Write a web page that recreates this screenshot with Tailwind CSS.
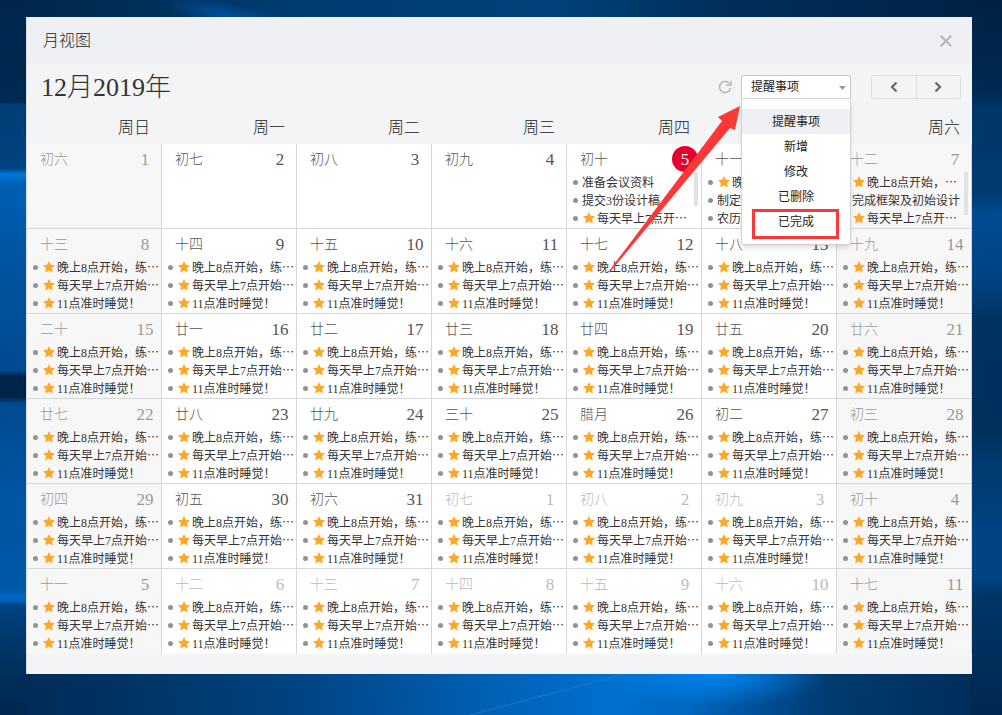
<!DOCTYPE html>
<html lang="zh-CN">
<head>
<meta charset="utf-8">
<meta name="viewport" content="width=device-width, initial-scale=1">
<title>月视图</title>
<script src="https://cdn.jsdelivr.net/npm/@tailwindcss/browser@4"></script>
</head>
<body class="relative min-h-screen overflow-hidden bg-[#003868] font-['Liberation_Serif','Noto_Sans_CJK_SC',sans-serif] text-[#222]">

<!-- Wallpaper -->
<svg class="absolute inset-0 h-full w-full" viewBox="0 0 1002 715" preserveAspectRatio="none" aria-hidden="true">
  <defs>
    <linearGradient id="top" x1="0" x2="1" y1="0" y2="0">
      <stop offset="0" stop-color="#00264a"/><stop offset=".15" stop-color="#003058"/><stop offset=".27" stop-color="#003a70"/><stop offset=".55" stop-color="#00427c"/><stop offset=".72" stop-color="#002f5a"/><stop offset="1" stop-color="#002145"/>
    </linearGradient>
    <linearGradient id="left" x1="0" x2="0" y1="0" y2="1">
      <stop offset="0" stop-color="#00264d"/><stop offset=".143" stop-color="#002a52"/><stop offset=".146" stop-color="#003e76"/><stop offset=".235" stop-color="#00437f"/><stop offset=".244" stop-color="#0078dc"/><stop offset=".256" stop-color="#0060b4"/><stop offset=".35" stop-color="#0055a4"/><stop offset=".518" stop-color="#004a90"/><stop offset=".526" stop-color="#00234a"/><stop offset=".555" stop-color="#00234a"/><stop offset=".565" stop-color="#004a90"/><stop offset=".7" stop-color="#0055a4"/><stop offset=".82" stop-color="#0057a8"/><stop offset=".838" stop-color="#0069c4"/><stop offset=".848" stop-color="#004280"/><stop offset=".93" stop-color="#00315f"/><stop offset="1" stop-color="#002850"/>
    </linearGradient>
    <linearGradient id="right" x1="0" x2="0" y1="0" y2="1">
      <stop offset="0" stop-color="#002145"/><stop offset=".13" stop-color="#002a52"/><stop offset=".15" stop-color="#00376a"/><stop offset=".27" stop-color="#003a70"/><stop offset=".3" stop-color="#004c90"/><stop offset=".4" stop-color="#004280"/><stop offset=".45" stop-color="#003260"/><stop offset=".6" stop-color="#002f5c"/><stop offset=".65" stop-color="#003a70"/><stop offset=".75" stop-color="#004484"/><stop offset=".81" stop-color="#004484"/><stop offset=".83" stop-color="#003668"/><stop offset="1" stop-color="#002850"/>
    </linearGradient>
    <linearGradient id="bottom" x1="0" x2="1" y1="0" y2="0">
      <stop offset="0" stop-color="#002b55"/><stop offset=".1" stop-color="#003160"/><stop offset=".3" stop-color="#004482"/><stop offset=".42" stop-color="#0056a4"/><stop offset=".52" stop-color="#0065bc"/><stop offset=".61" stop-color="#0070cd"/><stop offset=".68" stop-color="#0069c2"/><stop offset=".76" stop-color="#004e94"/><stop offset=".83" stop-color="#003b70"/><stop offset="1" stop-color="#002b56"/>
    </linearGradient>
    <radialGradient id="glow"><stop offset="0" stop-color="#0084f0"/><stop offset="1" stop-color="#0084f0" stop-opacity="0"/></radialGradient>
    <radialGradient id="beam"><stop offset="0" stop-color="#00509a"/><stop offset="1" stop-color="#00509a" stop-opacity="0"/></radialGradient>
  </defs>
  <rect width="1002" height="400" fill="url(#top)"/>
  <ellipse cx="230" cy="16" rx="70" ry="14" fill="url(#beam)" transform="rotate(12 230 16)"/>
  <rect y="674" width="1002" height="41" fill="url(#bottom)"/>
  <ellipse cx="715" cy="674" rx="110" ry="34" fill="url(#glow)"/>
  <path d="M470 715L625 674" stroke="#2a8ae0" stroke-opacity=".5"/>
  <path d="M0 0H27V715H0z" fill="url(#left)"/>
  <rect x="970" width="32" height="715" fill="url(#right)"/>
</svg>

<main class="relative mt-[17px] mr-[30px] ml-[26px] border-l border-[#d9dde3] bg-[#f3f4f6] pb-5">
  <header class="flex h-[47px] items-center justify-between bg-[#eff0f3] pr-5 pl-4">
    <h1 class="text-base font-light">月视图</h1>
    <button type="button" aria-label="关闭" class="text-[#b5b5b5]">
      <svg class="h-3 w-3" viewBox="0 0 12 12" fill="none" stroke="currentColor" stroke-width="2"><path d="M.7.7l10.6 10.6M11.3.7L.7 11.3"/></svg>
    </button>
  </header>

  <div class="flex h-[46px] items-center pr-[11px] pl-[14px]">
    <h2 class="flex-1 pt-[2px] text-[26px] leading-none font-light text-[#333]">12月2019年</h2>
    <button type="button" aria-label="刷新" class="mr-[9px] text-[#b0b0b0]">
      <svg class="h-[14px] w-[14px]" viewBox="0 0 14 14" fill="none" stroke="currentColor" stroke-width="1.4"><path d="M11.2 3.2A5.6 5.6 0 1 0 12.6 8"/><path d="M13 .8V5H8.4"/></svg>
    </button>
    <div class="relative mr-5 h-6 w-[110px]">
      <select aria-label="类型" class="block h-6 w-full appearance-none rounded-t-[2px] border border-[#c3c5c8] bg-white pl-[9px] text-xs font-normal text-[#222]">
        <option>提醒事项</option><option>新增</option><option>修改</option><option>已删除</option><option>已完成</option>
      </select>
      <svg class="pointer-events-none absolute top-[11px] right-[5px] h-1 w-[7px]" viewBox="0 0 7 4"><path d="M0 0h7L3.500 4z" fill="#999"/></svg>
      <ul class="absolute top-[23px] left-0 z-20 w-full rounded-b-[2px] border border-[#d0d2d5] bg-white py-[10px] text-center text-xs text-[#222] shadow-md">
        <li><button type="button" class="h-[25px] w-full bg-[#eff0f3]">提醒事项</button></li>
        <li><button type="button" class="h-[25px] w-full">新增</button></li>
        <li><button type="button" class="h-[25px] w-full">修改</button></li>
        <li><button type="button" class="h-[25px] w-full">已删除</button></li>
        <li class="relative"><button type="button" class="h-[25px] w-full">已完成</button>
          <span class="pointer-events-none absolute top-0 left-[10px] h-[30px] w-[87px] border-3 border-[#fb3838]"></span></li>
      </ul>
      <!-- Arrow pointing at the drop-down -->
      <svg class="pointer-events-none absolute top-[30px] right-[110px] z-30 h-[168px] w-[132px]" viewBox="0 0 132 168"><path d="M131 1L109 12l4 4L0 166l1 1L121 23l5 2z" fill="#fb3838"/></svg>
    </div>
    <div class="flex h-6 w-[90px] rounded-[2px] border border-[#dcdee1] text-[#666]">
      <button type="button" aria-label="上个月" class="flex flex-1 items-center justify-center border-r border-[#dcdee1]"><svg class="h-3 w-2" viewBox="0 0 8 12" fill="none" stroke="currentColor" stroke-width="2.200"><path d="M6.500 1.500L2 6l4.500 4.500"/></svg></button>
      <button type="button" aria-label="下个月" class="flex flex-1 items-center justify-center"><svg class="h-3 w-2" viewBox="0 0 8 12" fill="none" stroke="currentColor" stroke-width="2.200"><path d="M1.500 1.500L6 6l-4.500 4.500"/></svg></button>
    </div>
  </div>

  <table class="w-full table-fixed border-separate border-spacing-0">
    <thead>
      <tr class="h-[34px] text-right text-base leading-none">
        <th class="p-0 pt-[2px] pr-3 font-light">周日</th><th class="p-0 pt-[2px] pr-3 font-light">周一</th><th class="p-0 pt-[2px] pr-3 font-light">周二</th><th class="p-0 pt-[2px] pr-3 font-light">周三</th><th class="p-0 pt-[2px] pr-3 font-light">周四</th><th class="p-0 pt-[2px] pr-3 font-light">周五</th><th class="p-0 pt-[2px] pr-3 font-light">周六</th>
      </tr>
    </thead>
    <tbody id="days"></tbody>
  </table>
</main>

<script>
  const star = '<svg class="mr-[2px] ml-px h-3 w-3 flex-none" viewBox="0 0 12 12"><path d="M6 0l1.800 3.700 4.200.6-3 2.900.8 4.300L6 9.600l-3.800 1.900.8-4.300-3-2.900 4.200-.6z" fill="#ffa726"/></svg>';
  const more = '⋯';
  const usual = ['*晚上8点开始，练' + more, '*每天早上7点开始' + more, '*11点准时睡觉！'];
  const special = {
    4: ['准备会议资料', '提交3份设计稿', '*每天早上7点开' + more],
    5: ['*晚上8点开始，' + more, '制定学习计划', '农历十一'],
    6: ['*晚上8点开始，' + more, '完成框架及初始设计', '*每天早上7点开' + more]
  };
  const lunar = ('初六 初七 初八 初九 初十 十一 十二 十三 十四 十五 十六 十七 十八 十九 二十 廿一 廿二 廿三 廿四 廿五 廿六 ' +
    '廿七 廿八 廿九 三十 腊月 初二 初三 初四 初五 初六 初七 初八 初九 初十 十一 十二 十三 十四 十五 十六 十七').split(' ');
  const item = t =>
    '<li class="flex h-[18px] items-center whitespace-nowrap"><span class="mr-1 h-[5px] w-[5px] flex-none rounded-full bg-[#929292]"></span>' +
    (t[0] === '*' ? star : '') + '<span class="pt-px">' + t.replace('*', '') + '</span></li>';
  let html = '';
  for (let r = 0; r < 6; r++) {
    html += '<tr>';
    for (let c = 0; c < 7; c++) {
      const i = r * 7 + c, day = i % 31 + 1, weekend = c === 0 || c === 6;
      const tone = weekend ? 'text-[#999]' : i > 30 ? 'text-[#bbb]' : 'text-[#555]';
      const events = special[i] || (i < 4 ? [] : usual);
      const bar = i === 4 ? '<span class="absolute top-7 right-[3px] h-[34px] w-1 bg-[#e2e2e2]"></span>'
        : i === 6 ? '<span class="absolute top-7 right-[3px] h-[43px] w-1 bg-[#e2e2e2]"></span>' : '';
      html += '<td class="h-[85px] border-r border-[#d6d7da] p-0 align-top ' + (r < 5 ? 'border-b ' : '') + (weekend ? 'bg-[#f7f7f7]' : 'bg-white') + '">' +
        '<div class="relative"><div class="flex h-[29px] items-center justify-between pt-px pr-[3px] pl-[13px] ' + tone + '">' +
        '<span class="pt-px text-sm font-light">' + lunar[i] + '</span>' +
        '<span class="flex h-[26px] w-[26px] items-center justify-center pt-px text-[17px] leading-none ' + (i === 4 ? 'rounded-full bg-[#e5002d] text-white' : '') + '">' + day + '</span></div>' +
        '<ul class="overflow-hidden pl-[6px] text-xs text-[#333]">' + events.map(item).join('') + '</ul>' + bar + '</div></td>';
    }
    html += '</tr>';
  }
  document.getElementById('days').innerHTML = html;
</script>
</body>
</html>
